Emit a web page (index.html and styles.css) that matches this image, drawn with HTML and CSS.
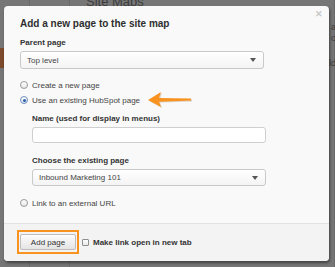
FILE: index.html
```html
<!DOCTYPE html>
<html lang="en">
<head>
  <meta charset="UTF-8" />
  <title>Add a new page to the site map</title>
  <link rel="stylesheet" href="styles.css">
</head>
<body>
  <!-- page behind the dialog -->
  <div class="page">
    <div class="col col-a"><span class="tab-strip"></span></div>
    <div class="col col-b"></div>
    <div class="col col-main">
      <div class="page-title">Site Maps</div>
      <div class="side-text">
        <span>a</span>
        <span>o</span>
        <span class="gap">ld</span>
      </div>
    </div>
  </div>

  <div class="modal">
    <span class="close">&#x2715;</span>
    <div class="modal-body">
      <h2>Add a new page to the site map</h2>

      <label class="field-label">Parent page</label>
      <div class="select wide">
        <span>Top level</span>
        <span class="caret"></span>
      </div>

      <div class="options">
        <div class="radio-row">
          <span class="radio"></span>
          <span>Create a new page</span>
        </div>
        <div class="radio-row">
          <span class="radio checked"></span>
          <span>Use an existing HubSpot page</span>
          <svg class="pointer" width="46" height="18" viewBox="0 0 46 18">
            <path d="M1 10 L14 2 L12 8 L44 8.5 L44 10.5 L12 11.5 L14 17 Z" fill="#8a5a2a" opacity="0.25"/>
            <path d="M0 9 L13 1 L11 7 L43 7.6 L43 9.6 L11 10.8 L13 16 Z" fill="#f7931e"/>
          </svg>
        </div>
      </div>

      <div class="nested">
        <label class="field-label">Name (used for display in menus)</label>
        <input type="text" class="text-input">

        <label class="field-label choose">Choose the existing page</label>
        <div class="select inner">
          <span>Inbound Marketing 101</span>
          <span class="caret"></span>
        </div>
      </div>

      <div class="radio-row last">
        <span class="radio"></span>
        <span>Link to an external URL</span>
      </div>
    </div>

    <div class="modal-footer">
      <span class="highlight">
        <button class="btn">Add page</button>
      </span>
      <span class="check"></span>
      <span class="check-label">Make link open in new tab</span>
    </div>
  </div>
</body>
</html>
```

FILE: styles.css
```css
body {
  margin: 0;
  width: 335px;
  height: 267px;
  overflow: hidden;
  background: #767676;
  font-family: "Liberation Sans", Arial, sans-serif;
  color: #333;
  position: relative;
}

.page {
  display: flex;
  height: 267px;
}

.col {
  border-right: 1px solid #6a6a6a;
  position: relative;
}

.col-a {
  width: 29px;
}

.col-b {
  width: 39px;
}

.col-main {
  flex: 1;
}

.tab-strip {
  position: absolute;
  left: 0;
  top: 48px;
  width: 29px;
  height: 20px;
  background: #7e4a2c;
}

.page-title {
  font-size: 13px;
  color: #3c3c3c;
  padding-left: 16px;
  margin-top: -6px;
}

.side-text {
  display: flex;
  flex-direction: column;
  align-items: flex-end;
  padding-right: 0;
  margin-top: 13px;
  font-size: 9px;
  color: #3c3c3c;
  line-height: 11px;
  margin-right: -2px;
}

.side-text .gap {
  margin-top: 14px;
}

.modal {
  position: absolute;
  left: 4px;
  top: 6px;
  width: 325px;
  background: #f9f9f9;
  border-radius: 4px;
  box-shadow: 1px 2px 3px rgba(0,0,0,0.45);
  overflow: hidden;
}

.close {
  position: absolute;
  right: 6px;
  top: 3px;
  font-size: 9px;
  font-weight: bold;
  color: #c8c8c8;
}

.modal-body {
  padding: 12px 16px 14px 16px;
}

h2 {
  margin: 0;
  font-size: 10px;
  line-height: 12px;
  font-weight: bold;
  color: #2e2e2e;
}

.field-label {
  display: block;
  margin-top: 8px;
  font-size: 8px;
  line-height: 10px;
  font-weight: bold;
  color: #333;
}

.select {
  display: flex;
  justify-content: space-between;
  align-items: center;
  box-sizing: border-box;
  margin-top: 3px;
  padding: 0 6px;
  border: 1px solid #c9c9c9;
  border-radius: 3px;
  background: linear-gradient(#ffffff, #f4f4f4);
  font-size: 8px;
  color: #444;
}

.select.wide {
  width: 244px;
  height: 18px;
}

.select.inner {
  width: 234px;
  height: 17px;
}

.caret {
  width: 0;
  height: 0;
  border-left: 3px solid transparent;
  border-right: 3px solid transparent;
  border-top: 4px solid #555;
  margin-right: 1px;
}

.options {
  margin-top: 10px;
}

.radio-row {
  display: flex;
  align-items: center;
  height: 12px;
  font-size: 8px;
  color: #444;
  position: relative;
}

.radio-row + .radio-row {
  margin-top: 3px;
}

.radio-row.last {
  margin-top: 11px;
}

.radio {
  box-sizing: border-box;
  width: 8px;
  height: 8px;
  margin-right: 4px;
  border: 1px solid #9a9a9a;
  border-radius: 50%;
  background: linear-gradient(#ffffff, #e6e6e6);
  position: relative;
}

.radio.checked {
  border-color: #6b8fbf;
}

.radio.checked::after {
  content: "";
  position: absolute;
  left: 1.5px;
  top: 1.5px;
  width: 3px;
  height: 3px;
  border-radius: 50%;
  background: #2a5fb0;
}

.pointer {
  position: absolute;
  left: 128px;
  top: -3px;
}

.nested {
  padding-left: 12px;
}

.text-input {
  display: block;
  box-sizing: border-box;
  width: 234px;
  height: 16px;
  margin: 3px 0 0 0;
  border: 1px solid #cfcfcf;
  border-radius: 3px;
  background: #fff;
}

.field-label.choose {
  margin-top: 13px;
}

.modal-footer {
  display: flex;
  align-items: center;
  padding: 6px 13px 7px 13px;
  border-top: 1px solid #e2e2e2;
  background: #f3f3f3;
}

.highlight {
  display: inline-flex;
  padding: 2px 1px;
  border: 2px solid #f7931e;
}

.btn {
  box-sizing: border-box;
  width: 56px;
  height: 16px;
  padding: 0;
  border: 1px solid #bdbdbd;
  border-radius: 2px;
  background: linear-gradient(#fdfdfd, #e4e4e4);
  font-family: "Liberation Sans", Arial, sans-serif;
  font-size: 8px;
  color: #333;
}

.check {
  box-sizing: border-box;
  width: 7px;
  height: 7px;
  margin-left: 3px;
  margin-right: 4px;
  border: 1px solid #8f8f8f;
  border-radius: 1px;
  background: linear-gradient(#ffffff, #e8e8e8);
}

.check-label {
  font-size: 8px;
  font-weight: bold;
  color: #333;
}
```
